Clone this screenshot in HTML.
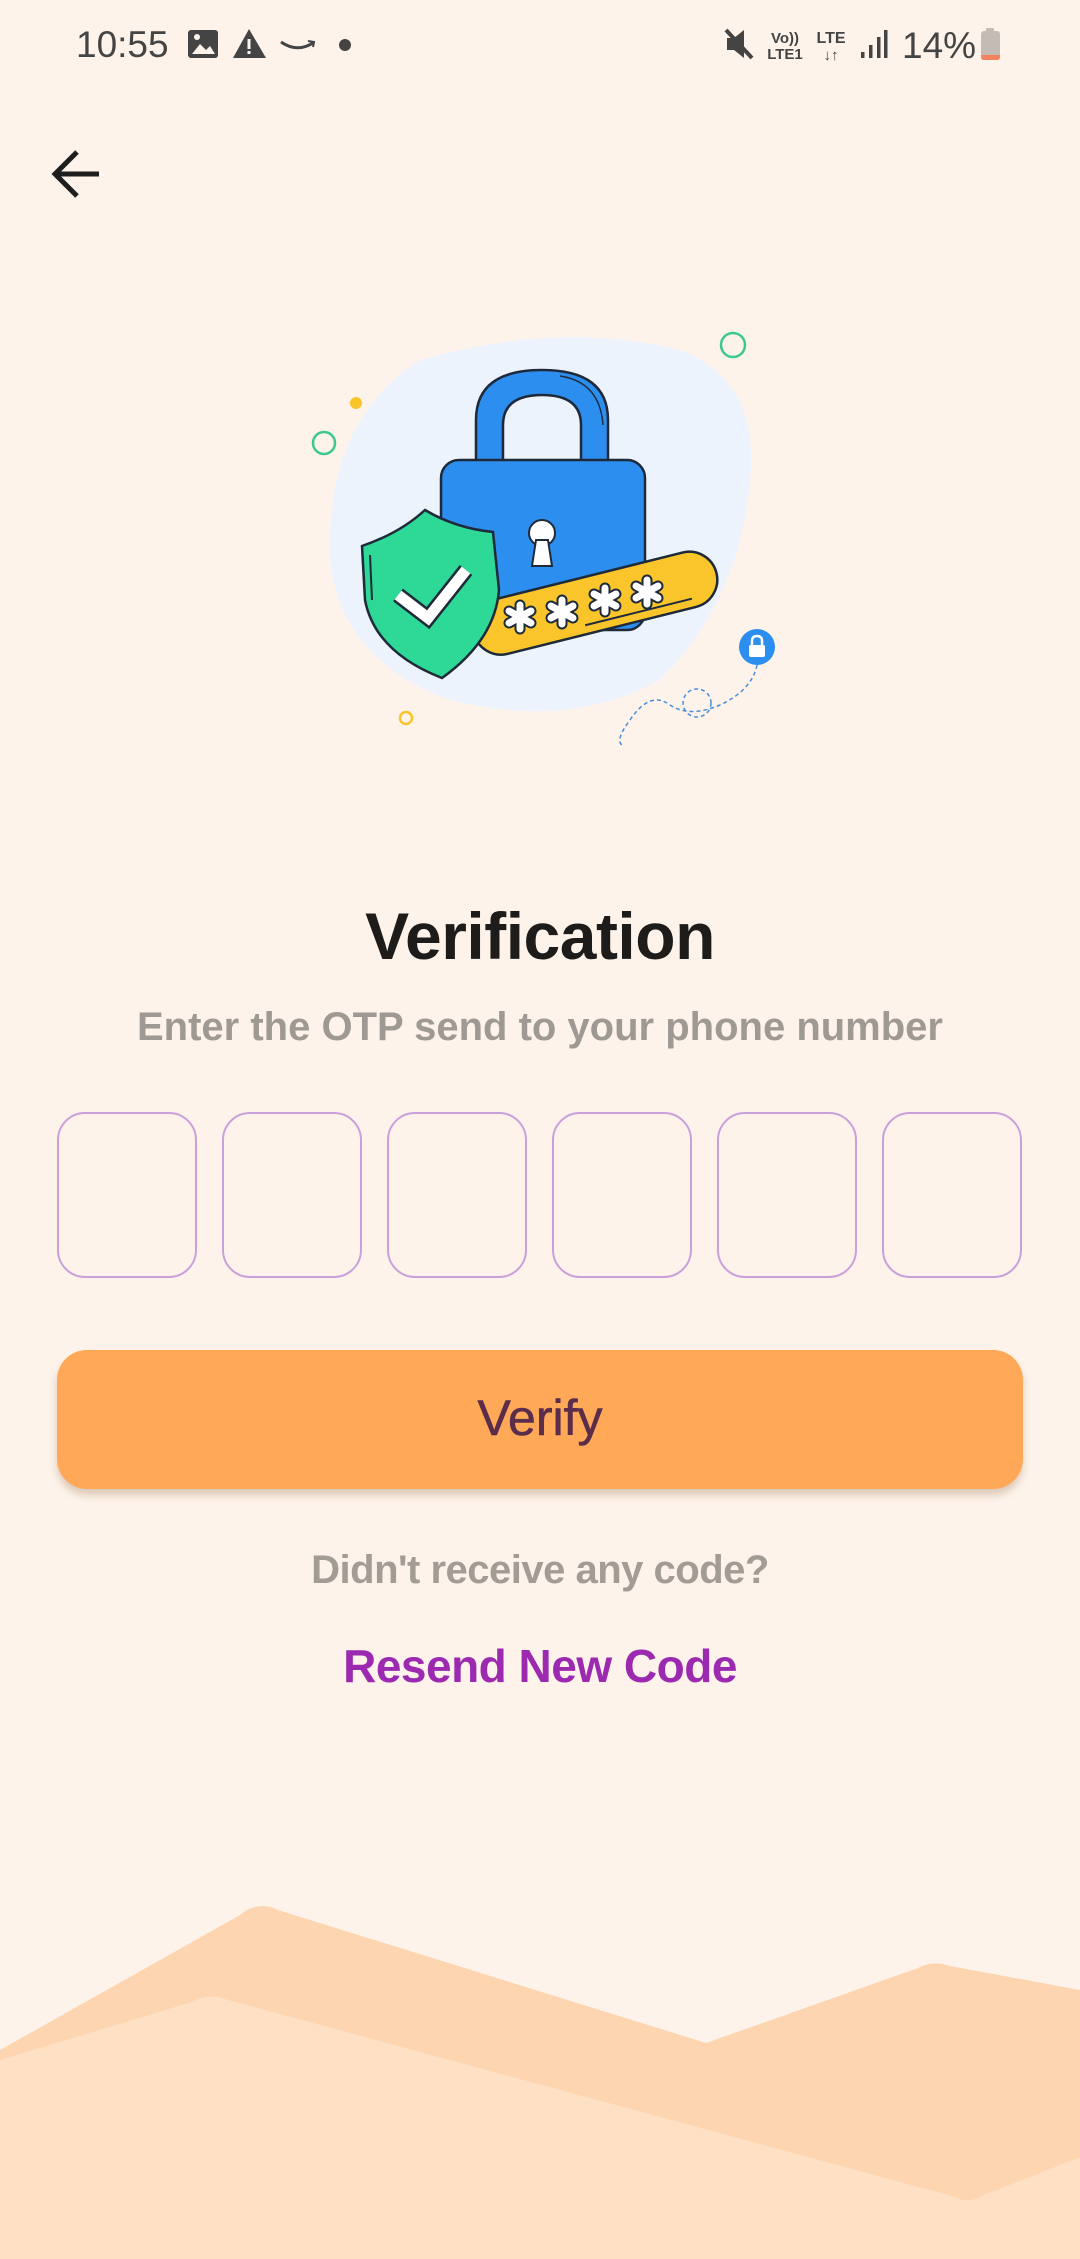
<!DOCTYPE html>
<html><head><meta charset="utf-8">
<style>
html,body{margin:0;padding:0}
body{width:1080px;height:2259px;background:#FEF3EA;position:relative;overflow:hidden;font-family:"Liberation Sans",sans-serif}
.abs{position:absolute}
.t{position:absolute;left:0;width:1080px;text-align:center;white-space:nowrap}
.box{position:absolute;top:1112px;width:136px;height:162px;border:2.5px solid #C9A0DC;border-radius:28px}
</style></head><body>
<svg class="abs" style="left:0;top:0" width="1080" height="2259" viewBox="0 0 1080 2259">
  <path d="M0,2050 L240,1915 Q258,1900 278,1910 L706,2043 L918,1968 Q933,1960 950,1966 L1080,1990 L1080,2259 L0,2259 Z" fill="#FDD5B1"/>
  <path d="M0,2060 L192,2002 Q210,1992 228,2000 L952,2196 Q968,2205 984,2195 L1080,2157 L1080,2259 L0,2259 Z" fill="#FEE0C4"/>
  <text x="76" y="57" font-size="37" fill="#444" font-family="Liberation Sans">10:55</text>
  <rect x="188" y="30" width="30" height="28" rx="3" fill="#444"/>
  <path d="M192,54 L200,44 L206,50 L210,46 L215,54 Z" fill="#FEF3EA"/>
  <circle cx="197" cy="37" r="3" fill="#FEF3EA"/>
  <path d="M249,29 L266,58 L233,58 Z" fill="#444"/>
  <rect x="247.5" y="39" width="3" height="10" fill="#FEF3EA"/><rect x="247.5" y="51" width="3" height="3" fill="#FEF3EA"/>
  <path d="M281,42 Q297,53 313,43" stroke="#444" stroke-width="3" fill="none"/>
  <path d="M308,41 L314,42 L313,47" stroke="#444" stroke-width="2" fill="none"/>
  <circle cx="345" cy="45" r="6" fill="#444"/>
  <path d="M727,38 L734,38 L744,30 L744,58 L734,50 L727,50 Z" fill="#444"/>
  <path d="M726,30 L752,58" stroke="#444" stroke-width="4"/>
  <text x="785" y="43" font-size="15" font-weight="bold" fill="#444" text-anchor="middle">Vo))</text>
  <text x="785" y="59" font-size="15" font-weight="bold" fill="#444" text-anchor="middle">LTE1</text>
  <text x="831" y="43" font-size="16" font-weight="bold" fill="#444" text-anchor="middle">LTE</text>
  <text x="831" y="60" font-size="15" font-weight="bold" fill="#444" text-anchor="middle">↓↑</text>
  <rect x="861" y="52" width="3.5" height="6" fill="#444"/><rect x="869" y="45" width="3.5" height="13" fill="#444"/><rect x="877" y="37" width="3.5" height="21" fill="#444"/><rect x="884" y="30" width="3.5" height="28" fill="#444"/>
  <text x="902" y="58" font-size="37" fill="#444">14%</text>
  <rect x="986" y="28" width="8" height="4" rx="1" fill="#C4BBB4"/>
  <rect x="981" y="31" width="19" height="29" rx="3" fill="#C4BBB4"/>
  <path d="M981,55 L1000,55 L1000,57 Q1000,60 997,60 L984,60 Q981,60 981,57 Z" fill="#F4845F"/>
  <path d="M56,174 L99,174 M77,152 L55,174 L77,196" stroke="#1E1E1E" stroke-width="5" fill="none"/>
  <path d="M420,360 Q560,320 680,350 Q760,380 750,480 Q740,600 660,680 Q570,730 450,700 Q340,660 330,560 Q325,420 420,360 Z" fill="#EDF3FC"/>
  <circle cx="733" cy="345" r="12" fill="none" stroke="#3CC98A" stroke-width="2.5"/>
  <circle cx="324" cy="443" r="11" fill="none" stroke="#3CC98A" stroke-width="2.5"/>
  <circle cx="356" cy="403" r="6" fill="#F9C52B"/>
  <circle cx="406" cy="718" r="6" fill="none" stroke="#F9C52B" stroke-width="2.5"/>
  <path d="M476,462 L476,420 Q476,370 542,370 Q608,370 608,420 L608,462 L581,462 L581,425 Q581,395 542,395 Q503,395 503,425 L503,462 Z" fill="#2C8FF0" stroke="#1E2A3A" stroke-width="2.5"/>
  <path d="M560,376 Q600,382 603,425" fill="none" stroke="#1E2A3A" stroke-width="1.5"/>
  <rect x="441" y="460" width="204" height="170" rx="18" fill="#2C8FF0" stroke="#1E2A3A" stroke-width="2.5"/>
  <circle cx="542" cy="533" r="13" fill="#fff" stroke="#1E2A3A" stroke-width="2"/>
  <path d="M536,540 L532,566 L552,566 L548,540 Z" fill="#fff" stroke="#1E2A3A" stroke-width="2"/>
  <g transform="translate(600,602) rotate(-14)">
    <rect x="-130" y="-28" width="250" height="56" rx="28" fill="#F9C52B" stroke="#1E2A3A" stroke-width="2.5"/>
    <path d="M-20,19 L90,19" stroke="#1E2A3A" stroke-width="2"/>
  </g>
  <g fill="none" stroke="#1E2A3A" stroke-width="11" stroke-linecap="round">
    <path d="M520,605 L520,629 M509,611 L531,623 M509,623 L531,611"/>
    <path d="M562,600 L562,624 M551,606 L573,618 M551,618 L573,606"/>
    <path d="M605,588 L605,612 M594,594 L616,606 M594,606 L616,594"/>
    <path d="M647,580 L647,604 M636,586 L658,598 M636,598 L658,586"/>
  </g>
  <g fill="none" stroke="#fff" stroke-width="7" stroke-linecap="round">
    <path d="M520,605 L520,629 M509,611 L531,623 M509,623 L531,611"/>
    <path d="M562,600 L562,624 M551,606 L573,618 M551,618 L573,606"/>
    <path d="M605,588 L605,612 M594,594 L616,606 M594,606 L616,594"/>
    <path d="M647,580 L647,604 M636,586 L658,598 M636,598 L658,586"/>
  </g>
  <path d="M425,510 Q400,533 362,546 L365,600 Q375,652 442,678 Q495,640 499,590 L493,532 Q455,528 425,510 Z" fill="#2ED896" stroke="#1E2A3A" stroke-width="2.5"/>
  <path d="M370,555 L372,600" stroke="#1E2A3A" stroke-width="2"/>
  <path d="M398,595 L428,618 L466,570" fill="none" stroke="#1E2A3A" stroke-width="16" stroke-linejoin="miter"/>
  <path d="M398,595 L428,618 L466,570" fill="none" stroke="#fff" stroke-width="11"/>
  <circle cx="757" cy="647" r="18" fill="#2C8FF0"/>
  <path d="M752,646 L752,641 Q752,636 757,636 Q762,636 762,641 L762,646" fill="none" stroke="#fff" stroke-width="2.5"/>
  <rect x="749" y="645" width="16" height="12" rx="2" fill="#fff"/>
  <path d="M757,665 Q752,690 720,705 Q690,718 670,705 Q650,690 630,720 Q615,740 622,745" fill="none" stroke="#4A8FD8" stroke-width="1.5" stroke-dasharray="4 3"/>
  <circle cx="697" cy="703" r="14" fill="none" stroke="#4A8FD8" stroke-width="1.5" stroke-dasharray="4 3"/>
</svg>
<div class="t" style="top:894px;font-size:66px;font-weight:bold;color:#1E1C1A;letter-spacing:-0.5px;line-height:84px">Verification</div>
<div class="t" style="top:1002px;font-size:40px;font-weight:bold;color:#9F9993;letter-spacing:0px;line-height:50px">Enter the OTP send to your phone number</div>
<div class="box" style="left:57px"></div>
<div class="box" style="left:222px"></div>
<div class="box" style="left:387px"></div>
<div class="box" style="left:552px"></div>
<div class="box" style="left:717px"></div>
<div class="box" style="left:882px"></div>
<div class="abs" style="left:57px;top:1350px;width:966px;height:139px;background:#FFA858;border-radius:30px;box-shadow:0 6px 8px rgba(120,80,40,0.25)"></div>
<div class="t" style="top:1388px;font-size:50px;color:#5A2D4A;line-height:60px;-webkit-text-stroke:0.6px #5A2D4A">Verify</div>
<div class="t" style="top:1545px;font-size:40px;font-weight:bold;color:#A39C95;letter-spacing:-0.5px;line-height:50px">Didn't receive any code?</div>
<div class="t" style="top:1638px;font-size:46px;font-weight:bold;color:#9C2AB0;letter-spacing:-0.5px;line-height:56px">Resend New Code</div>
</body></html>
